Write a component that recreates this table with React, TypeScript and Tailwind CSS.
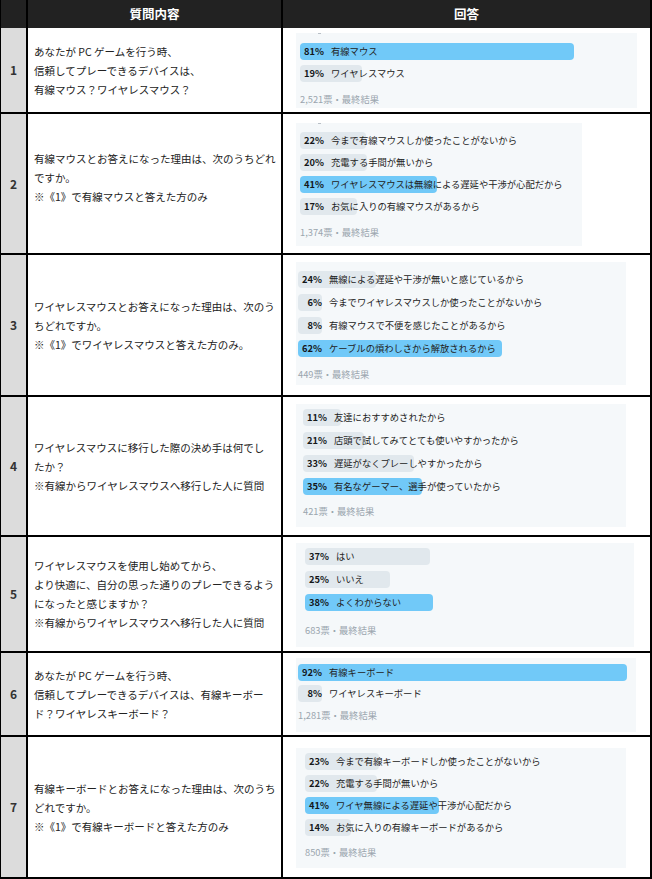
import React from "react";

type Opt = { p: string; label: string; w: number; win?: boolean };
type Poll = {
  top: number;
  h: number;
  w: number;
  inset: number;
  pt: number;
  gap: number;
  fmt: number;
  opts: Opt[];
  footer: string;
  dash?: boolean;
};
type Row = { n: string; h: number; q: string[]; qpb?: number; poll: Poll };

const rows: Row[] = [
  {
    n: "1",
    h: 86,
    q: ["あなたが PC ゲームを行う時、", "信頼してプレーできるデバイスは、", "有線マウス？ワイヤレスマウス？"],
    poll: {
      top: 5, h: 75, w: 341, inset: 4, pt: 10, gap: 5, fmt: 11, dash: true,
      opts: [
        { p: "81%", label: "有線マウス", w: 274, win: true },
        { p: "19%", label: "ワイヤレスマウス", w: 62 },
      ],
      footer: "2,521票・最終結果",
    },
  },
  {
    n: "2",
    h: 141,
    qpb: 13,
    q: ["有線マウスとお答えになった理由は、次のうちどれ", "ですか。", "※《1》で有線マウスと答えた方のみ"],
    poll: {
      top: 9, h: 123, w: 286, inset: 4, pt: 9, gap: 5, fmt: 11, dash: true,
      opts: [
        { p: "22%", label: "今まで有線マウスしか使ったことがないから", w: 66 },
        { p: "20%", label: "充電する手間が無いから", w: 67 },
        { p: "41%", label: "ワイヤレスマウスは無線による遅延や干渉が心配だから", w: 137, win: true },
        { p: "17%", label: "お気に入りの有線マウスがあるから", w: 57 },
      ],
      footer: "1,374票・最終結果",
    },
  },
  {
    n: "3",
    h: 142,
    q: ["ワイヤレスマウスとお答えになった理由は、次のう", "ちどれですか。", "※《1》でワイヤレスマウスと答えた方のみ。"],
    poll: {
      top: 7, h: 123, w: 330, inset: 2, pt: 9, gap: 6, fmt: 11,
      opts: [
        { p: "24%", label: "無線による遅延や干渉が無いと感じているから", w: 78 },
        { p: "6%", label: "今までワイヤレスマウスしか使ったことがないから", w: 24 },
        { p: "8%", label: "有線マウスで不便を感じたことがあるから", w: 24 },
        { p: "62%", label: "ケーブルの煩わしさから解放されるから", w: 204, win: true },
      ],
      footer: "449票・最終結果",
    },
  },
  {
    n: "4",
    h: 140,
    q: ["ワイヤレスマウスに移行した際の決め手は何でし", "たか？", "※有線からワイヤレスマウスへ移行した人に質問"],
    poll: {
      top: 7, h: 123, w: 330, inset: 7, pt: 5, gap: 6, fmt: 10,
      opts: [
        { p: "11%", label: "友達におすすめされたから", w: 38 },
        { p: "21%", label: "店頭で試してみてとても使いやすかったから", w: 61 },
        { p: "33%", label: "遅延がなくプレーしやすかったから", w: 111 },
        { p: "35%", label: "有名なゲーマー、選手が使っていたから", w: 119, win: true },
      ],
      footer: "421票・最終結果",
    },
  },
  {
    n: "5",
    h: 116,
    q: [
      "ワイヤレスマウスを使用し始めてから、",
      "より快適に、自分の思った通りのプレーできるよう",
      "になったと感じますか？",
      "※有線からワイヤレスマウスへ移行した人に質問",
    ],
    poll: {
      top: 6, h: 104, w: 338, inset: 9, pt: 5, gap: 6, fmt: 13,
      opts: [
        { p: "37%", label: "はい", w: 125 },
        { p: "25%", label: "いいえ", w: 85 },
        { p: "38%", label: "よくわからない", w: 128, win: true },
      ],
      footer: "683票・最終結果",
    },
  },
  {
    n: "6",
    h: 84,
    q: ["あなたが PC ゲームを行う時、", "信頼してプレーできるデバイスは、有線キーボー", "ド？ワイヤレスキーボード？"],
    poll: {
      top: 5, h: 74, w: 340, inset: 2, pt: 6, gap: 4, fmt: 7,
      opts: [
        { p: "92%", label: "有線キーボード", w: 329, win: true },
        { p: "8%", label: "ワイヤレスキーボード", w: 24 },
      ],
      footer: "1,281票・最終結果",
    },
  },
  {
    n: "7",
    h: 142,
    q: ["有線キーボードとお答えになった理由は、次のうち", "どれですか。", "※《1》で有線キーボードと答えた方のみ"],
    poll: {
      top: 11, h: 120, w: 330, inset: 9, pt: 5, gap: 5, fmt: 10,
      opts: [
        { p: "23%", label: "今まで有線キーボードしか使ったことがないから", w: 74 },
        { p: "22%", label: "充電する手間が無いから", w: 72 },
        { p: "41%", label: "ワイヤ無線による遅延や干渉が心配だから", w: 134, win: true },
        { p: "14%", label: "お気に入りの有線キーボードがあるから", w: 46 },
      ],
      footer: "850票・最終結果",
    },
  },
];

function PollCard({ poll }: { poll: Poll }) {
  return (
    <div
      className="relative flex flex-col bg-[#f5f8fa]"
      style={{ width: poll.w, height: poll.h, marginTop: poll.top, paddingTop: poll.pt, paddingLeft: poll.inset }}
    >
      {poll.dash && <span className="absolute left-[22px] top-0 h-px w-[3px] bg-[#b8bfc6]" />}
      <div className="flex flex-col" style={{ gap: poll.gap }}>
        {poll.opts.map((o, i) => (
          <div key={i} className="grid h-[17px] items-center">
            <div
              className={`col-start-1 row-start-1 h-[17px] rounded-[4px] ${o.win ? "bg-[#71c9f8]" : "bg-[#e1e8ed]"}`}
              style={{ width: o.w }}
            />
            <div className="col-start-1 row-start-1 flex items-center whitespace-nowrap text-[9.3px] leading-[17px] text-[#14171a]">
              <span className="w-[24px] text-right font-bold">{o.p}</span>
              <span className="ml-[7px] text-[#222]">{o.label}</span>
            </div>
          </div>
        ))}
      </div>
      <div className="text-[9.3px] leading-[13px] text-[#9aa5ae]" style={{ marginTop: poll.fmt }}>
        {poll.footer}
      </div>
    </div>
  );
}

export default function App() {
  return (
    <div
      className="h-[879px] w-[652px] bg-white"
      style={{ fontFamily: '"Noto Sans CJK JP", "Noto Sans", sans-serif' }}
    >
      <div className="w-[652px] border-l border-r-2 border-black">
        <div className="flex h-[28px] bg-[#222222] text-[12.5px] font-bold leading-[28px] text-white">
          <div className="w-[27px] shrink-0 border-r-2 border-black" />
          <div className="w-[255px] shrink-0 border-r-2 border-black text-center">質問内容</div>
          <div className="flex-1 text-center">回答</div>
        </div>
        {rows.map((r) => (
          <div key={r.n} className="flex border-b-2 border-black" style={{ height: r.h }}>
            <div className="flex w-[27px] shrink-0 items-center justify-center border-r-2 border-black bg-[#dcdcdc] text-[12px] font-semibold text-[#333]">
              {r.n}
            </div>
            <div
              className="flex w-[255px] shrink-0 flex-col justify-center border-r-2 border-black pl-[6px] text-[10.5px] leading-[19px] text-[#222]"
              style={{ paddingBottom: r.qpb ?? 0 }}
            >
              {r.q.map((l, i) => (
                <div key={i} className="whitespace-nowrap">{l}</div>
              ))}
            </div>
            <div className="flex-1 pl-[13px]">
              <PollCard poll={r.poll} />
            </div>
          </div>
        ))}
      </div>
    </div>
  );
}
